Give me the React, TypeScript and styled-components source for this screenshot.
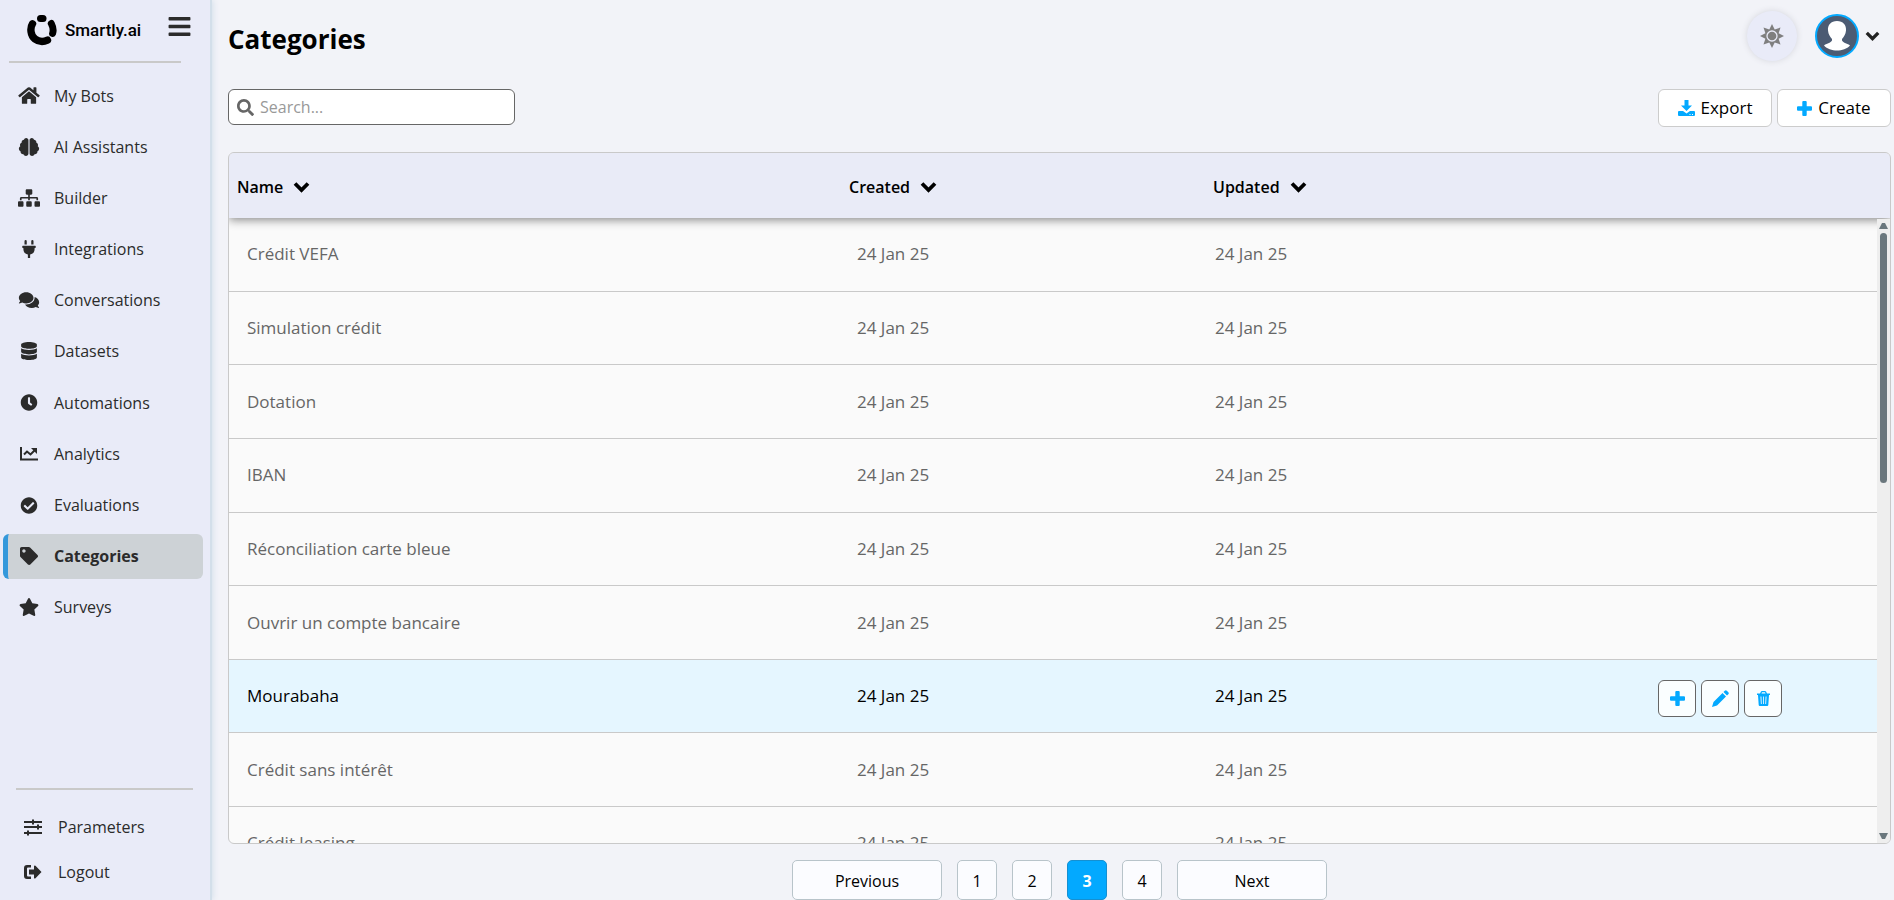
import React from "react";
import styled, { createGlobalStyle, css } from "styled-components";
import {
  FaHome, FaBrain, FaSitemap, FaPlug, FaComments, FaDatabase, FaClock, FaCheckCircle,
  FaTag, FaStar, FaSearch, FaBars,
} from "react-icons/fa";

const GlobalStyle = createGlobalStyle`
  * { box-sizing: border-box; }
  body {
    margin: 0;
    background: #f2f3f8;
    color: #000;
    font-family: "Open Sans", "Noto Sans", sans-serif;
    font-size: 17px;
    line-height: 24px;
  }
  button, input { font: inherit; color: inherit; }
  button { cursor: pointer; }
`;

const Page = styled.div`
  display: flex;
  height: 100vh;
  min-height: 780px;
`;

const Sidebar = styled.aside`
  display: flex;
  flex-direction: column;
  flex: none;
  width: 212px;
  background: #e9ebf8;
  border-right: 2px solid #d3dfea;
  box-shadow: 1px 0 6px #d3dfea;
  color: #2b2b2b;
  font-size: 16px;
`;

const Brand = styled.div`
  display: flex;
  align-items: center;
  justify-content: space-between;
  height: 61px;
  padding: 0 18px 2px 27px;
`;

const Logo = styled.a`
  display: flex;
  align-items: center;
  gap: 8px;
  color: #000;
  font-family: Roboto, sans-serif;
  font-size: 17px;
  font-weight: 500;
  text-decoration: none;
`;

const MenuButton = styled.button`
  display: flex;
  margin-bottom: 6px;
  padding: 0;
  border: 0;
  background: none;
`;

const Divider = styled.hr<{ $bottom?: boolean }>`
  width: ${(p) => (p.$bottom ? 177 : 172)}px;
  height: 2px;
  margin: ${(p) => (p.$bottom ? "auto 0 14px 16px" : "0 0 10px 9px")};
  border: 0;
  background: #c9c9c9;
`;

const NavList = styled.ul<{ $bottom?: boolean }>`
  display: flex;
  flex-direction: column;
  justify-content: space-between;
  height: ${(p) => (p.$bottom ? "auto" : "557px")};
  margin: 0;
  padding: ${(p) => (p.$bottom ? "0 0 6px 7px" : "0 0 0 3px")};
  list-style: none;
`;

const NavLink = styled.a<{ $active?: boolean }>`
  display: flex;
  align-items: center;
  gap: 14px;
  width: 200px;
  height: 45px;
  padding-left: 10px;
  border-left: 5px solid transparent;
  border-radius: 6px;
  color: inherit;
  text-decoration: none;
  svg { flex: none; width: 22px; }
  ${(p) => p.$active && css`
    border-left-color: #3498db;
    background: #cdd2d6;
    font-weight: 700;
  `}
`;

const Main = styled.main`
  display: flex;
  flex-direction: column;
  flex: 1;
  min-width: 0;
  padding: 0 3px 0 16px;
`;

const TopBar = styled.header`
  display: flex;
  align-items: center;
  justify-content: space-between;
  height: 89px;
  padding: 0 11px 12px 0;
`;

const Title = styled.h1`
  margin: 0;
  font-size: 26px;
  line-height: 36px;
  font-weight: 700;
`;

const Account = styled.div`
  display: flex;
  align-items: center;
  margin-bottom: 6px;
`;

const ThemeButton = styled.button`
  display: grid;
  place-items: center;
  width: 50px;
  height: 50px;
  margin-right: 18px;
  padding: 0;
  border: 0;
  border-radius: 50%;
  background: #e9ebf8;
  box-shadow: 0 0 6px #d4d5dc;
`;

const AccountButton = styled.button`
  display: flex;
  align-items: center;
  gap: 6px;
  padding: 0;
  border: 0;
  background: none;
`;

const Toolbar = styled.div`
  display: flex;
  align-items: flex-start;
  justify-content: space-between;
  height: 63px;
`;

const SearchBox = styled.label`
  display: flex;
  align-items: center;
  gap: 6px;
  width: 287px;
  height: 36px;
  padding: 0 8px;
  border: 1px solid #666;
  border-radius: 6px;
  background: #fff;
  color: #666;
  font-size: 16px;
  svg { flex: none; }
`;

const SearchInput = styled.input`
  flex: 1;
  min-width: 0;
  padding: 0;
  border: 0;
  outline: 0;
  background: none;
  &::placeholder { color: #999; opacity: 1; }
`;

const ButtonGroup = styled.div`
  display: flex;
  gap: 5px;
`;

const ToolButton = styled.button`
  display: flex;
  align-items: center;
  justify-content: center;
  gap: 6px;
  min-width: 114px;
  height: 38px;
  padding: 0 18px;
  border: 1px solid #ccc;
  border-radius: 6px;
  background: #fff;
  svg { color: #03a9ff; }
`;

const TableFrame = styled.div`
  display: grid;
  grid-template-columns: minmax(0, 1fr) 13px;
  grid-template-rows: 66px minmax(0, 1fr);
  flex: 1;
  min-height: 0;
  overflow: hidden;
  border: 1px solid #c9c9c9;
  border-radius: 6px;
  background: #fafafa;
`;

const Table = styled.table`
  display: flex;
  flex-direction: column;
  grid-area: 1 / 1 / 3 / 3;
  min-height: 0;
`;

const TableHead = styled.thead`
  position: relative;
  display: block;
  flex: none;
  background: #e9ebf7;
  box-shadow: 0 2px 9px #888;
`;

const HeadRow = styled.tr`
  display: grid;
  grid-template-columns: 612fr 364fr 685fr;
  align-items: center;
  height: 65px;
`;

const HeadCell = styled.th`
  padding: 2px 8px 0;
  font-size: 16px;
  font-weight: 600;
  text-align: left;
`;

const SortButton = styled.button`
  display: flex;
  align-items: center;
  gap: 10px;
  padding: 0;
  border: 0;
  background: none;
`;

const TableBody = styled.tbody`
  display: block;
  flex: 1;
  min-height: 0;
  padding-right: 13px;
  overflow-y: auto;
  scrollbar-width: none;
`;

/* Eight and a half rows fill the space left under the table head. */
const Row = styled.tr<{ $active?: boolean }>`
  display: grid;
  grid-template-columns: 610fr 358fr 443fr 237fr;
  align-items: center;
  height: max(56px, calc((100vh - 274px) / 8.5));
  border-bottom: 1px solid #c9c9c9;
  color: ${(p) => (p.$active ? "#000" : "#666")};
  background: ${(p) => (p.$active ? "#e5f6ff" : "transparent")};
`;

const Cell = styled.td`
  padding: 0 18px;
`;

const Actions = styled.div`
  display: flex;
  gap: 5px;
  padding-top: 4px;
`;

const IconButton = styled.button`
  display: grid;
  place-items: center;
  width: 38px;
  height: 37px;
  padding: 0;
  border: 1px solid #666;
  border-radius: 6px;
  background: #fafeff;
  color: #03a9ff;
`;

const Scrollbar = styled.div`
  z-index: 1;
  display: flex;
  flex-direction: column;
  align-items: center;
  grid-area: 2 / 2;
  padding: 3px 0;
  background: #eee;
`;

const ScrollTrack = styled.div`
  flex: 1;
  width: 7px;
  margin: 4px 0;
`;

const ScrollThumb = styled.div`
  height: 42%;
  border-radius: 4px;
  background: #6a777d;
`;

const Pagination = styled.nav`
  display: flex;
  justify-content: center;
  gap: 15px;
  padding-top: 16px;
  font-size: 16px;
`;

const PageButton = styled.button<{ $wide?: boolean; $active?: boolean }>`
  width: ${(p) => (p.$wide ? 150 : 40)}px;
  height: 40px;
  padding: 1px 0 0;
  border: 1px solid ${(p) => (p.$active ? "#1590d2" : "#b8c4ca")};
  border-radius: 5px;
  background: ${(p) => (p.$active ? "#03a9ff" : "#fbfcff")};
  color: ${(p) => (p.$active ? "#fff" : "#000")};
  font-weight: ${(p) => (p.$active ? 700 : 400)};
`;

const LogoMark = () => (
  <svg width="30" height="32" viewBox="0 0 30 32" fill="none" stroke="#000" strokeLinecap="round" aria-hidden="true">
    <path d="M13.500 4.500h2.500" strokeWidth="7" />
    <path d="M5.500 9.800C2.800 14 3.500 21.500 8 25c4 3 8.500 3 12.500 1.200" strokeWidth="7.400" />
    <path d="M24.300 9.500c1.800 3.500 2.300 7 1.300 10" strokeWidth="7" />
  </svg>
);

const Chevron = ({ size = 17, color = "#000" }: { size?: number; color?: string }) => (
  <svg width={size} height={size} viewBox="0 0 17 17" fill="none" stroke={color} strokeWidth="3.800" aria-hidden="true">
    <path d="M2 5.500 8.500 12 15 5.500" />
  </svg>
);

const ScrollArrow = ({ down }: { down?: boolean }) => (
  <svg width="9" height="7" viewBox="0 0 9 7" fill="#6a777d" aria-hidden="true">
    <path d={down ? "M0 0h9L6 6H3z" : "M0 7h9L6 1H3z"} />
  </svg>
);

const AnalyticsIcon = () => (
  <svg width="18" height="18" viewBox="0 0 18 18" fill="none" stroke="currentColor" strokeWidth="2" aria-hidden="true">
    <path d="M1 2v12.500h17M4 9.500 7 6.500l3.500 3L15 5" />
    <path d="M11 3h6v6z" fill="currentColor" stroke="none" />
  </svg>
);

const SlidersIcon = () => (
  <svg width="18" height="18" viewBox="0 0 18 18" fill="none" stroke="currentColor" strokeWidth="2" aria-hidden="true">
    <path d="M0 4h18M0 9h18M0 15h18M9 1.500v5M14 6.500v5M4 12.500v5" />
  </svg>
);

const LogoutIcon = () => (
  <svg width="18" height="16" viewBox="0 0 18 16" fill="currentColor" aria-hidden="true">
    <path d="M7 1v2.500H4q-1 0-1 1v7q0 1 1 1h3V15H3q-3 0-3-3V4q0-3 3-3z" />
    <path d="M5 5.500h5V2q.5-1 1.500-.3L17.500 8l-6 6.300q-1 .7-1.500-.3v-3.500H5z" />
  </svg>
);

const SunIcon = () => (
  <svg width="24" height="24" viewBox="0 0 24 24" fill="#7f7f7f" aria-hidden="true">
    <path d="M12 0l2.700 5.400L20.500 3.500l-1.900 5.800L24 12l-5.400 2.700 1.900 5.800-5.800-1.900L12 24l-2.700-5.400-5.800 1.900 1.900-5.800L0 12l5.400-2.700L3.500 3.500l5.800 1.900z" />
    <circle cx="12" cy="12" r="5" stroke="#e9ebf8" strokeWidth="1.300" />
  </svg>
);

const Avatar = () => (
  <svg width="44" height="44" viewBox="0 0 44 44" aria-hidden="true">
    <circle cx="22" cy="22" r="21" fill="#4c5b73" stroke="#03a9ff" strokeWidth="2" />
    <path d="M22 7c6 0 9.500 4 9 9.500-.4 4-2 6-4 8.500v1.500c1 2.500 6 3 8 5-3 3.500-8 5-13 5s-10-1.500-13-5c2-2 7-2.500 8-5V25c-2-2.500-3.600-4.500-4-8.500C12.500 11 16 7 22 7z" fill="#fff" />
  </svg>
);

const DownloadIcon = () => (
  <svg width="17" height="17" viewBox="0 0 17 17" fill="currentColor" aria-hidden="true">
    <path d="M6.500 0h4v5.500H14L8.500 11 3 5.500h3.500z" />
    <path fillRule="evenodd" d="M1 11h4l3.500 2.500L12 11h4q1 0 1 1v3q0 1-1 1H1q-1 0-1-1v-3q0-1 1-1zm10.500 3v1h1v-1zm2.500 0v1h1v-1z" />
  </svg>
);

const PlusIcon = () => (
  <svg width="15" height="15" viewBox="0 0 15 15" fill="currentColor" aria-hidden="true">
    <path d="M6.300 0h2.400q1 0 1 1v4.300H14q1 0 1 1v2.400q0 1-1 1H9.700V14q0 1-1 1H6.300q-1 0-1-1V9.700H1q-1 0-1-1V6.300q0-1 1-1h4.300V1q0-1 1-1z" />
  </svg>
);

const PencilIcon = () => (
  <svg width="17" height="17" viewBox="0 0 17 17" fill="currentColor" aria-hidden="true">
    <path d="M0 17l1.500-5L10.500 3 14 6.500 5 15.500zM11.500 2l1.300-1.300q1-1 2 0l1.500 1.500q1 1 0 2L15 5.500z" />
  </svg>
);

const TrashIcon = () => (
  <svg width="13" height="15" viewBox="0 0 13 15" fill="currentColor" aria-hidden="true">
    <path fillRule="evenodd" d="M0 2.500h3L4 .5Q4.300 0 5 0h3q.7 0 1 .5l1 2h3V4h-1l-.7 10q-.1 1-1 1H2.700q-.9 0-1-1L1 4H0zM4.500 2.500h4L8 1.200H5zM3.500 5.500l.4 7.500h.8l-.3-7.500zM6.100 5.500V13h.8V5.500zM8.600 5.500 8.300 13h.8l.4-7.500z" />
  </svg>
);

const navItems = [
  { label: "My Bots", icon: <FaHome size={19} /> },
  { label: "AI Assistants", icon: <FaBrain size={18} /> },
  { label: "Builder", icon: <FaSitemap size={18} /> },
  { label: "Integrations", icon: <FaPlug size={18} /> },
  { label: "Conversations", icon: <FaComments size={18} /> },
  { label: "Datasets", icon: <FaDatabase size={18} /> },
  { label: "Automations", icon: <FaClock size={17} /> },
  { label: "Analytics", icon: <AnalyticsIcon /> },
  { label: "Evaluations", icon: <FaCheckCircle size={17} /> },
  { label: "Categories", icon: <FaTag size={18} />, active: true },
  { label: "Surveys", icon: <FaStar size={18} /> },
];

const categories = [
  "Crédit VEFA", "Simulation crédit", "Dotation", "IBAN", "Réconciliation carte bleue",
  "Ouvrir un compte bancaire", "Mourabaha", "Crédit sans intérêt", "Crédit leasing",
];

export default function App() {
  const selected = "Mourabaha";
  return (
    <>
      <GlobalStyle />
      <Page>
        <Sidebar>
          <Brand>
            <Logo href="#"><LogoMark />Smartly.ai</Logo>
            <MenuButton aria-label="Toggle menu"><FaBars size={25} /></MenuButton>
          </Brand>
          <Divider />
          <nav>
            <NavList>
              {navItems.map((item) => (
                <li key={item.label}>
                  <NavLink href="#" $active={item.active}>{item.icon}{item.label}</NavLink>
                </li>
              ))}
            </NavList>
          </nav>
          <Divider $bottom />
          <NavList $bottom>
            <li><NavLink href="#"><SlidersIcon />Parameters</NavLink></li>
            <li><NavLink href="#"><LogoutIcon />Logout</NavLink></li>
          </NavList>
        </Sidebar>
        <Main>
          <TopBar>
            <Title>Categories</Title>
            <Account>
              <ThemeButton aria-label="Toggle theme"><SunIcon /></ThemeButton>
              <AccountButton aria-label="Account"><Avatar /><Chevron size={15} color="#222" /></AccountButton>
            </Account>
          </TopBar>
          <Toolbar>
            <SearchBox>
              <FaSearch size={17} />
              <SearchInput type="text" placeholder="Search..." aria-label="Search" />
            </SearchBox>
            <ButtonGroup>
              <ToolButton><DownloadIcon />Export</ToolButton>
              <ToolButton><PlusIcon />Create</ToolButton>
            </ButtonGroup>
          </Toolbar>
          <TableFrame>
            <Table>
              <TableHead>
                <HeadRow>
                  {["Name", "Created", "Updated"].map((name) => (
                    <HeadCell key={name} scope="col"><SortButton>{name}<Chevron /></SortButton></HeadCell>
                  ))}
                </HeadRow>
              </TableHead>
              <TableBody>
                {categories.map((name) => (
                  <Row key={name} $active={name === selected}>
                    <Cell>{name}</Cell>
                    <Cell>24 Jan 25</Cell>
                    <Cell>24 Jan 25</Cell>
                    <Cell>
                      {name === selected && (
                        <Actions>
                          <IconButton aria-label="Add"><PlusIcon /></IconButton>
                          <IconButton aria-label="Edit"><PencilIcon /></IconButton>
                          <IconButton aria-label="Delete"><TrashIcon /></IconButton>
                        </Actions>
                      )}
                    </Cell>
                  </Row>
                ))}
              </TableBody>
            </Table>
            <Scrollbar aria-hidden="true">
              <ScrollArrow />
              <ScrollTrack><ScrollThumb /></ScrollTrack>
              <ScrollArrow down />
            </Scrollbar>
          </TableFrame>
          <Pagination aria-label="Pages">
            <PageButton $wide>Previous</PageButton>
            {[1, 2, 3, 4].map((n) => (
              <PageButton key={n} $active={n === 3} aria-current={n === 3 ? "page" : undefined}>{n}</PageButton>
            ))}
            <PageButton $wide>Next</PageButton>
          </Pagination>
        </Main>
      </Page>
    </>
  );
}
